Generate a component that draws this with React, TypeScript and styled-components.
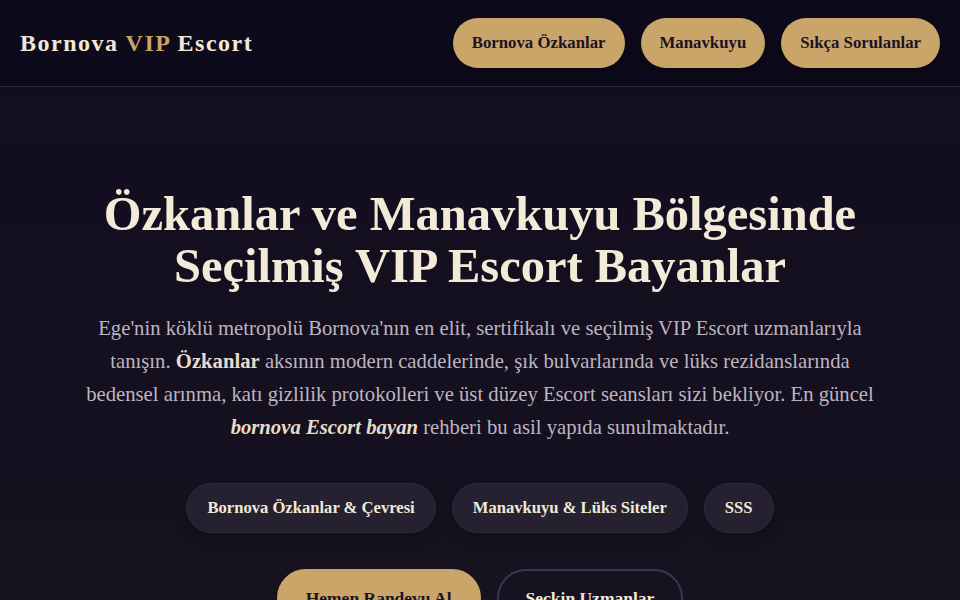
import styled, { createGlobalStyle } from 'styled-components';

const GlobalStyle = createGlobalStyle`
  html, body {
    margin: 0;
    padding: 0;
    background: #15101f;
  }
  body {
    font-family: "Liberation Serif", "DejaVu Serif", serif;
    color: #f1e9d8;
  }
  * {
    box-sizing: border-box;
  }
`;

const Page = styled.div`
  min-height: 600px;
  background: linear-gradient(180deg, #120d20 0%, #17121f 100%);
`;

const Header = styled.header`
  height: 87px;
  display: flex;
  align-items: center;
  justify-content: space-between;
  padding: 0 20px;
  background: #0d0a1b;
  border-bottom: 1px solid #2c2740;
`;

const Logo = styled.div`
  font-size: 24px;
  font-weight: 700;
  letter-spacing: 1.5px;
  color: #f1e9d8;

  span {
    color: #c9a468;
  }
`;

const Nav = styled.nav`
  display: flex;
  gap: 16px;
`;

const NavLink = styled.a`
  height: 50px;
  padding: 0 19px;
  display: flex;
  align-items: center;
  border-radius: 25px;
  background: #c9a56a;
  color: #1c1224;
  font-size: 16.8px;
  font-weight: 700;
  text-decoration: none;
  box-shadow: 0 4px 12px rgba(0, 0, 0, 0.35);
`;

const Hero = styled.section`
  display: flex;
  flex-direction: column;
  align-items: center;
  padding: 101px 60px 0;
  text-align: center;
`;

const Title = styled.h1`
  margin: 0;
  font-size: 48.5px;
  line-height: 52px;
  font-weight: 700;
  color: #f3ead8;
`;

const Lead = styled.p`
  margin: 20px 0 0;
  max-width: 810px;
  font-size: 20.7px;
  line-height: 33px;
  color: #bdb5c0;

  strong {
    color: #e6dccb;
  }

  em {
    font-weight: 700;
    color: #e6dccb;
  }
`;

const ChipRow = styled.div`
  display: flex;
  gap: 16px;
  margin-top: 39px;
`;

const Chip = styled.a`
  height: 50px;
  padding: 0 20px;
  display: flex;
  align-items: center;
  border-radius: 25px;
  background: #252131;
  border: 1px solid #2e2a3c;
  color: #f1e9d8;
  font-size: 16.6px;
  font-weight: 700;
  text-decoration: none;
  box-shadow: 0 4px 12px rgba(0, 0, 0, 0.25);
`;

const ActionRow = styled.div`
  display: flex;
  gap: 16px;
  margin-top: 36px;
`;

const Action = styled.a<{ $primary?: boolean }>`
  height: 58px;
  padding: 0 27px;
  display: flex;
  align-items: center;
  border-radius: 29px;
  background: ${(p) => (p.$primary ? '#c9a56a' : 'transparent')};
  border: 2px solid ${(p) => (p.$primary ? '#c9a56a' : '#3a3550')};
  color: ${(p) => (p.$primary ? '#1c1224' : '#f1e9d8')};
  font-size: 17.5px;
  font-weight: 700;
  text-decoration: none;
`;

export default function App() {
  return (
    <Page>
      <GlobalStyle />
      <Header>
        <Logo>
          Bornova <span>VIP</span> Escort
        </Logo>
        <Nav>
          <NavLink href="#">Bornova Özkanlar</NavLink>
          <NavLink href="#">Manavkuyu</NavLink>
          <NavLink href="#">Sıkça Sorulanlar</NavLink>
        </Nav>
      </Header>
      <Hero>
        <Title>
          Özkanlar ve Manavkuyu Bölgesinde
          <br />
          Seçilmiş VIP Escort Bayanlar
        </Title>
        <Lead>
          Ege'nin köklü metropolü Bornova'nın en elit, sertifikalı ve seçilmiş VIP Escort uzmanlarıyla
          tanışın. <strong>Özkanlar</strong> aksının modern caddelerinde, şık bulvarlarında ve lüks
          rezidanslarında bedensel arınma, katı gizlilik protokolleri ve üst düzey Escort seansları sizi
          bekliyor. En güncel <em>bornova Escort bayan</em> rehberi bu asil yapıda sunulmaktadır.
        </Lead>
        <ChipRow>
          <Chip href="#">Bornova Özkanlar &amp; Çevresi</Chip>
          <Chip href="#">Manavkuyu &amp; Lüks Siteler</Chip>
          <Chip href="#">SSS</Chip>
        </ChipRow>
        <ActionRow>
          <Action href="#" $primary>
            Hemen Randevu Al
          </Action>
          <Action href="#">Seçkin Uzmanlar</Action>
        </ActionRow>
      </Hero>
    </Page>
  );
}
